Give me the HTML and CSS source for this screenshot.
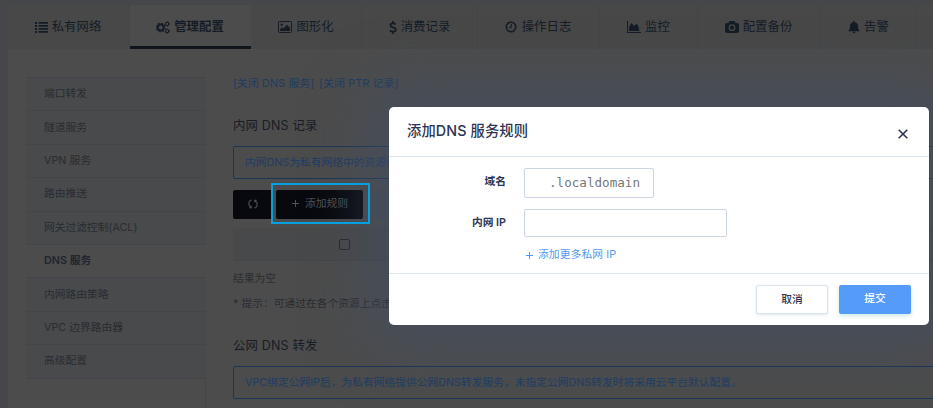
FILE: index.html
```html
<!DOCTYPE html>
<html lang="zh-CN">
<head>
<meta charset="utf-8">
<title>私有网络 - DNS 服务</title>
<link rel="stylesheet" href="styles.css">
</head>
<body>
<div class="page">
  <nav class="tabs">
    <a class="tab t1"><svg width="13" height="12" viewBox="0 0 13 12"><path d="M0 1h2v2H0zM0 4h2v2H0zM0 7h2v2H0zM0 10h2v2H0zM3.500 1H13v1.700H3.500zM3.500 4H13v1.700H3.500zM3.500 7H13v1.700H3.500zM3.500 10H13v1.700H3.500z"/></svg>私有网络</a>
    <a class="tab t2 active"><svg width="14" height="13" viewBox="0 0 14 13"><g fill="none" stroke="currentColor"><circle cx="4.700" cy="6.500" r="2.900" stroke-width="2"/><circle cx="4.700" cy="6.500" r="4.300" stroke-width="1.200" stroke-dasharray="1.700 1.677"/><circle cx="11.200" cy="2.900" r="1.600" stroke-width="1.100"/><circle cx="11.200" cy="2.900" r="2.300" stroke-width=".7" stroke-dasharray="1.200 1.208"/><circle cx="11.200" cy="10.100" r="1.600" stroke-width="1.100"/><circle cx="11.200" cy="10.100" r="2.300" stroke-width=".7" stroke-dasharray="1.200 1.208"/></g></svg>管理配置</a>
    <a class="tab t3"><svg width="14" height="12" viewBox="0 0 14 12"><rect x=".5" y=".5" width="13" height="11" rx="1" fill="none" stroke="currentColor"/><circle cx="3.700" cy="3.700" r="1.200"/><path d="M2 10V8.300l2-2 1.300 1.200L9 3.700l3 3V10z"/></svg>图形化</a>
    <a class="tab t4"><svg width="8" height="13" viewBox="0 0 8 13"><path d="M6.700 3.400C6 2.600 5 2.300 4 2.300c-1.500 0-2.600.7-2.600 1.900 0 2.900 5.400 1.500 5.400 4.400 0 1.300-1.200 2.100-2.800 2.100-1.300 0-2.300-.5-3.100-1.300M4 0v2.400M4 10.500V13" fill="none" stroke="currentColor" stroke-width="1.700"/></svg>消费记录</a>
    <a class="tab t5"><svg width="12" height="12" viewBox="0 0 12 12"><circle cx="6" cy="6" r="4.700" fill="none" stroke="currentColor" stroke-width="1.600"/><path d="M6.300 3v3.400H3.800" fill="none" stroke="currentColor"/></svg>操作日志</a>
    <a class="tab t6"><svg width="14" height="12" viewBox="0 0 14 12"><path d="M0 0h1v11h13v1H0zM2 10V6l2.500-4 2.700 3 2-2L11 4l1.500 6z"/></svg>监控</a>
    <a class="tab t7"><svg width="14" height="12" viewBox="0 0 14 12"><path fill-rule="evenodd" d="M4.500 0h5l1 2H12q2 0 2 2v6q0 2-2 2H2q-2 0-2-2V4q0-2 2-2h1.500zM7 3.300a3.400 3.400 0 100 6.800 3.400 3.400 0 000-6.800M7 4.600a2.100 2.100 0 110 4.200 2.100 2.100 0 010-4.200"/></svg>配置备份</a>
    <a class="tab t8"><svg width="12" height="13" viewBox="0 0 12 13"><path d="M6 0q.9 0 .9 1.200C9 1.700 10 3.200 10 5.200c0 2.500.6 3.900 2 5H0c1.400-1.100 2-2.500 2-5 0-2 1-3.500 3.100-4C5.100.4 5.300 0 6 0zM4.500 10.800h3Q7.300 12.300 6 12.300T4.500 10.800"/></svg>告警</a>
    <span class="tab rest"></span>
  </nav>
  <div class="content">
    <aside class="sidebar">
      <a>端口转发</a><a>隧道服务</a><a>VPN 服务</a><a>路由推送</a><a>网关过滤控制(ACL)</a><a class="current">DNS 服务</a><a>内网路由策略</a><a>VPC 边界路由器</a><a>高级配置</a>
    </aside>
    <main>
      <div class="links"><a>[关闭 DNS 服务]</a><a>[关闭 PTR 记录]</a></div>
      <h2>内网 DNS 记录</h2>
      <div class="alert">内网DNS为私有网络中的资源绑定</div>
      <div class="toolbar">
        <button class="dark refresh"><svg width="10" height="10" viewBox="0 0 10 10"><path d="M3.700 1.200H2.500L1 3v3l2 2.500M1.200 8.700h2V6.800M6.300 8.800h1.200L9 7V4L7 1.500M8.800 1.300h-2v1.900" fill="none" stroke="currentColor" stroke-width="1.100"/></svg></button>
        <button class="dark add"><svg width="7" height="7" viewBox="0 0 7 7"><path d="M3 0h1v3h3v1H4v3H3V4H0V3h3z"/></svg>添加规则</button>
        <button class="delete"><svg width="10" height="10" viewBox="0 0 10 10"><path d="M0 1h3V0h4v1h3v2H0zM1 4h8v6H1z"/></svg></button>
      </div>
      <div class="table-head"><i class="checkbox"></i></div>
      <p class="empty">结果为空</p>
      <p class="tip">* 提示：可通过在各个资源上点击</p>
      <h2 class="public">公网 DNS 转发</h2>
      <div class="alert long">VPC绑定公网IP后，为私有网络提供公网DNS转发服务，未指定公网DNS转发时将采用云平台默认配置。</div>
    </main>
  </div>
</div>
<section class="modal">
  <header><h1>添加DNS 服务规则</h1><svg width="10" height="10" viewBox="0 0 10 10"><path d="M.7.700l8.600 8.600M9.300.7L.7 9.300" fill="none" stroke="currentColor" stroke-width="1.600"/></svg></header>
  <div class="form">
    <div class="field domain"><label>域名</label><div class="input">.localdomain</div></div>
    <div class="field ip"><label>内网 IP</label><div class="input"></div></div>
    <a class="more"><svg width="7" height="7" viewBox="0 0 7 7"><path d="M3 0h1v3h3v1H4v3H3V4H0V3h3z"/></svg>添加更多私网 IP</a>
  </div>
  <footer><button>取消</button><button class="primary">提交</button></footer>
</section>
<div class="focus"></div>
</body>
</html>
```
FILE: styles.css
```css
* { box-sizing: border-box; }
body {
  margin: 0;
  width: 933px;
  height: 408px;
  overflow: hidden;
  position: relative;
  background: #45474b;
  color: #262b35;
  font: 10.75px/16px Inter, "Noto Sans CJK SC", sans-serif;
}
h1, h2, p { margin: 0; font-weight: 400; }
svg { fill: currentColor; flex: none; }
button { font: inherit; border: 0; padding: 0; display: flex; align-items: center; justify-content: center; }
.page { margin-left: 8px; padding-top: 5px; height: 408px; }
.tabs { display: flex; height: 44px; background: #484848; }
.tab {
  display: flex;
  align-items: center;
  justify-content: center;
  gap: 4px;
  flex: none;
  border-right: 1px solid #434548;
  color: #151c26;
  font-size: 12.4px;
  white-space: nowrap;
}
.t1 { width: 122px; padding-right: 1px; }
.t2 { width: 121px; }
.t3 { width: 111px; }
.t4 { width: 116px; }
.t5 { width: 122px; gap: 5px; padding-right: 1px; }
.t6 { width: 98px; }
.t7 { width: 123px; padding-right: 1px; }
.t8 { width: 96px; }
.rest { width: 16px; border: 0; }
.active { background: #4c4c4c; font-weight: 700; border-bottom: 3px solid #10161b; border-right: 0; padding: 3px 1px 0 0; }
.content { display: flex; height: 359px; background: #4c4c4c; padding: 28px 0 0 18px; }
.sidebar { width: 180px; flex: none; border-top: 1px solid #424549; border-right: 1px solid #444649; }
.sidebar a {
  display: flex;
  align-items: center;
  height: 33.4px;
  padding-left: 18px;
  margin-right: -1px;
  background: #484a4c;
  border-bottom: 1px solid #424549;
  color: #292c32;
}
.sidebar .current { background: #4c4c4c; font-weight: 600; color: #202530; }
main { width: 720px; flex: none; margin-left: 27px; }
.links { display: flex; gap: 5px; height: 16px; margin-top: -1px; color: #1e3b62; letter-spacing: .15px; }
h2 { font-size: 12.4px; line-height: 18px; margin: 25px 0 11px; color: #181c26; letter-spacing: .2px; }
.alert {
  height: 33px;
  line-height: 31px;
  padding-left: 11px;
  border: 1px solid #1b3557;
  border-radius: 2px;
  color: #1d3c65;
  white-space: nowrap;
}
.toolbar { display: flex; margin-top: 11px; height: 29px; }
.toolbar button { height: 29px; border-radius: 2px; padding-bottom: 2px; }
.dark { background: #08090e; color: #515256; }
.refresh { width: 40px; }
.toolbar .add { width: 87px; margin-left: 3px; gap: 6px; padding-left: 1px; }
.toolbar .delete { width: 80px; margin-left: 8px; background: #484b50; color: #3b4048; padding-right: 33px; }
.table-head { height: 33px; margin-top: 9px; padding: 11px 0 0 106px; background: #48494a; border-bottom: 1px solid #434547; }
.checkbox { display: block; width: 11px; height: 11px; border: 1px solid #27292d; border-radius: 2px; }
.empty { margin-top: 10px; color: #292c32; }
.tip { margin-top: 9px; color: #292c32; white-space: nowrap; }
.public { margin: 25px 0 11px; }
.focus { position: absolute; left: 271px; top: 183px; width: 99px; height: 41px; border: 2px solid #05a0e0; }
.modal {
  position: absolute;
  left: 389px;
  top: 107px;
  width: 540px;
  height: 218px;
  border-radius: 5px;
  background: #fff;
  color: #2d3454;
  box-shadow: 0 0 60px 20px rgba(65, 80, 103, .58);
}
.modal header { display: flex; justify-content: space-between; align-items: center; height: 50px; padding: 0 21px 0 18px; border-bottom: 1px solid #dce5ee; }
.modal h1 { font-size: 14.3px; font-weight: 500; line-height: 20px; padding-bottom: 1px; letter-spacing: .12px; }
.modal header svg { margin-top: 5px; }
.form { height: 116px; padding-top: 11px; }
.field { display: flex; }
.field label { width: 117px; margin-right: 18px; text-align: right; font-weight: 600; line-height: 27px; }
.input { border: 1px solid #cdd5e4; border-radius: 2px; }
.domain .input { width: 130px; height: 30px; padding-right: 13px; text-align: right; font: 12.6px/28px "DejaVu Sans Mono", monospace; color: #777; }
.ip { margin-top: 11px; }
.ip .input { width: 203px; height: 28px; }
.more { display: flex; align-items: center; gap: 5px; margin: 10px 0 0 137px; color: #5398f1; letter-spacing: .1px; }
.modal footer { display: flex; justify-content: flex-end; gap: 11px; height: 52px; padding: 11px 18px 0 0; border-top: 1px solid #dce5ee; }
footer button { width: 72px; height: 29px; border: 1px solid #dce4ed; border-radius: 2px; background: #fff; color: #2d3450; font-weight: 500; box-shadow: 0 1px 3px #dce9ed; }
footer .primary { border: 0; background: #559bfa; color: #fff; padding-bottom: 2px; box-shadow: 0 2px 4px #cce9e8; }
```
